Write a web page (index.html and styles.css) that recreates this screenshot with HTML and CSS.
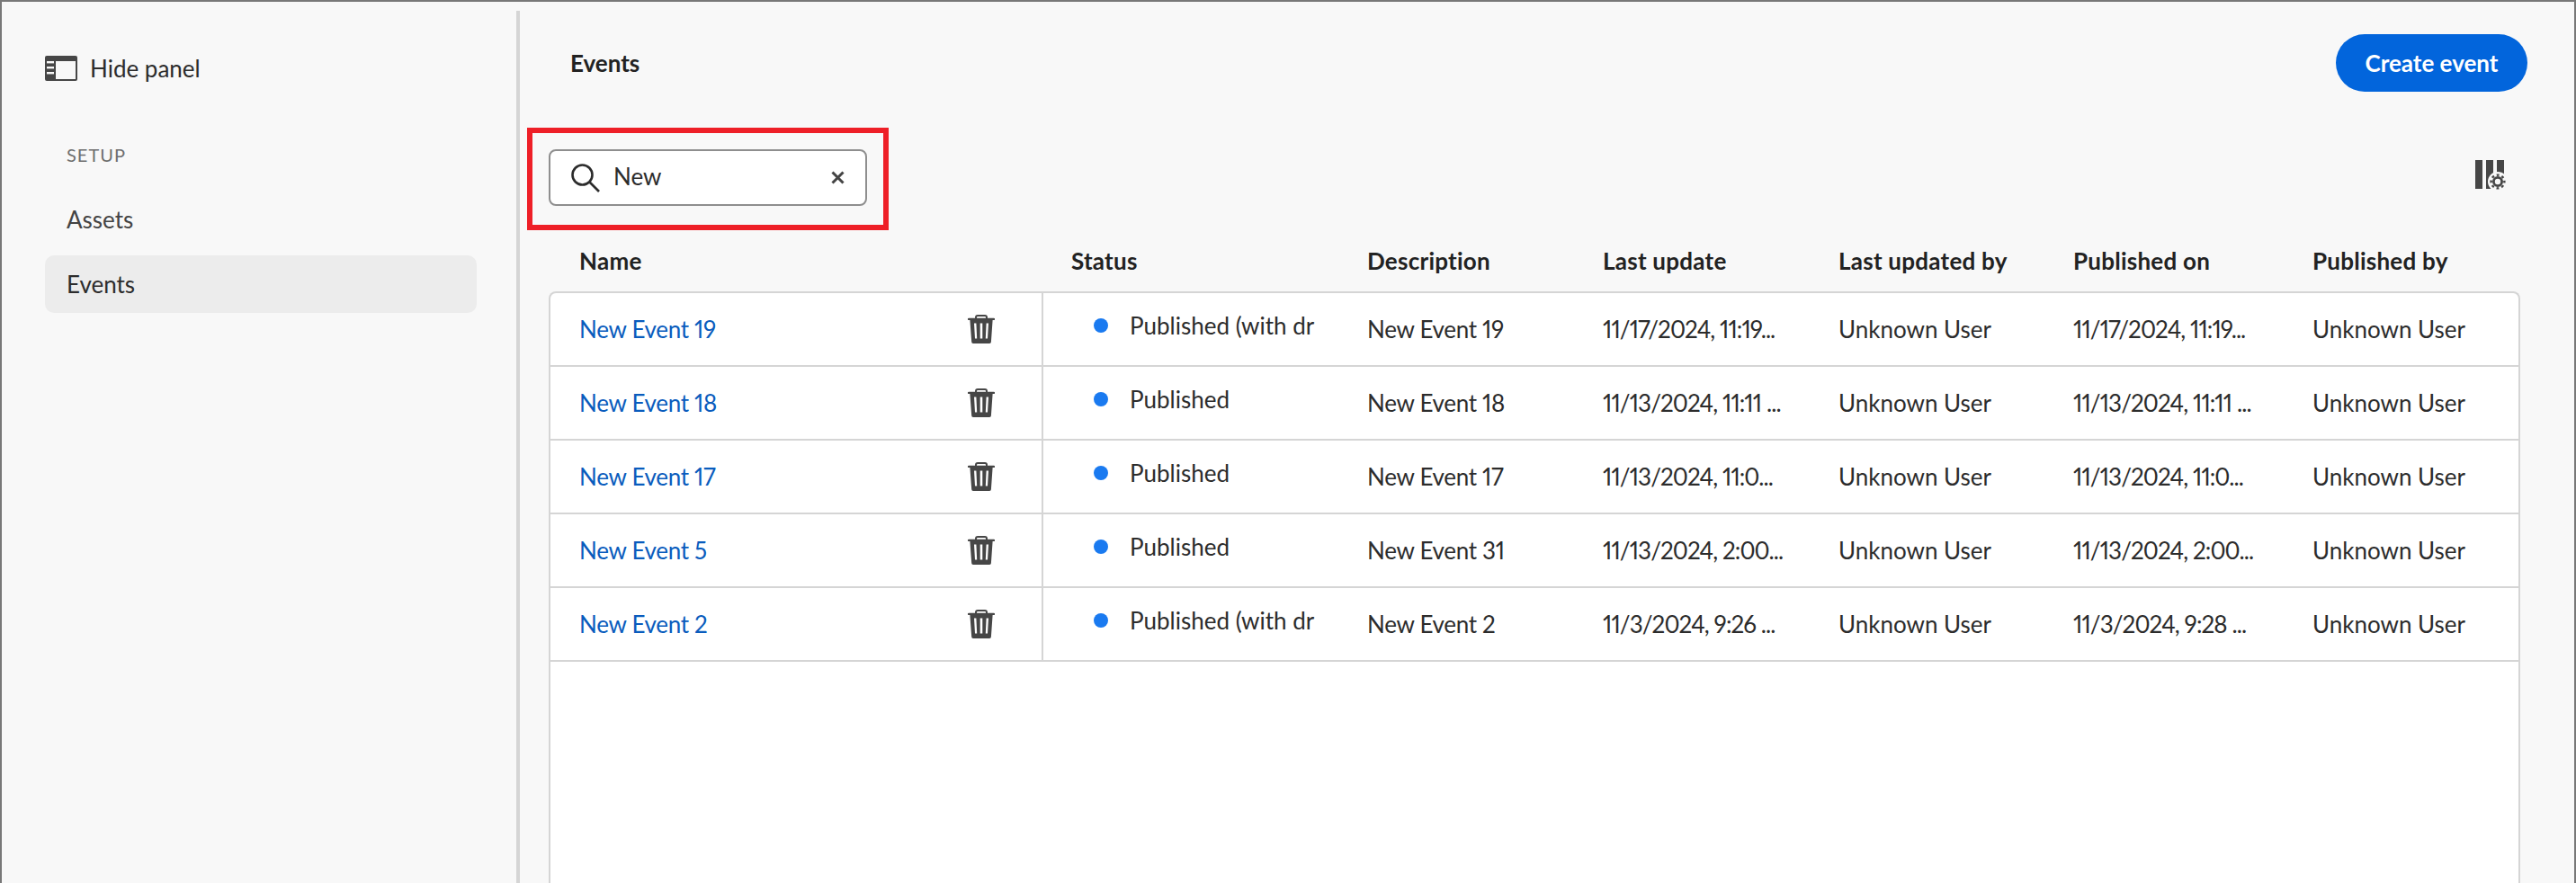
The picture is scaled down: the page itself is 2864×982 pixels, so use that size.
FILE: index.html
```html
<!DOCTYPE html>
<html lang="en">
<head>
    <meta charset="UTF-8">
    <title>Events</title>
    <link rel="stylesheet" href="styles.css">
</head>
<body>
    <div class="frame">
        <!-- Left panel -->
        <aside class="sidebar">
            <div class="hide-panel">
                <svg class="panel-icon" viewBox="0 0 36 28">
                    <rect width="36" height="28" rx="2" fill="#464646"/>
                    <rect x="12" y="6" width="22" height="20" fill="#f8f8f8"/>
                    <rect x="2" y="6" width="8" height="2.4" fill="#f8f8f8"/>
                    <rect x="2" y="12" width="8" height="2.4" fill="#f8f8f8"/>
                    <rect x="2" y="18" width="8" height="2.4" fill="#f8f8f8"/>
                </svg>
                <span>Hide panel</span>
            </div>
            <div class="nav-title">SETUP</div>
            <nav class="nav-list">
                <a class="nav-item" href="#">Assets</a>
                <a class="nav-item active" href="#">Events</a>
            </nav>
        </aside>

        <main class="content">
            <div class="page-head">
                <h1>Events</h1>
                <button class="btn-create" type="button">Create event</button>
            </div>

            <div class="toolbar">
                <div class="search">
                    <svg class="search-icon" viewBox="0 0 32 32">
                        <circle cx="12.5" cy="12.5" r="11" fill="none" stroke="#2c2c2c" stroke-width="2.6"/>
                        <line x1="20.5" y1="20.5" x2="31" y2="31" stroke="#2c2c2c" stroke-width="2.6"/>
                    </svg>
                    <span class="search-value">New</span>
                    <svg class="clear-icon" viewBox="0 0 15 15">
                        <path d="M1.5 1.5l12 12M13.5 1.5l-12 12" fill="none" stroke="#444" stroke-width="3"/>
                    </svg>
                    <!-- Annotation drawn over the screenshot -->
                    <div class="callout"></div>
                </div>
                <svg class="columns-icon" viewBox="0 0 36 36">
                    <rect x="0" y="0" width="8" height="32" fill="#464646"/>
                    <rect x="12" y="0" width="8" height="32" fill="#464646"/>
                    <rect x="24" y="0" width="8" height="32" fill="#464646"/>
                    <circle cx="25" cy="24" r="11" fill="#f8f8f8"/>
                    <circle cx="25" cy="24" r="4.6" fill="none" stroke="#464646" stroke-width="2.8"/>
                    <circle cx="25" cy="24" r="7.400" fill="none" stroke="#464646" stroke-width="2.4" stroke-dasharray="2.8 3" stroke-dashoffset="1.4"/>
                </svg>
            </div>

            <div class="row head-row">
                <div class="cell first">Name</div>
                <div class="cell">Status</div>
                <div class="cell">Description</div>
                <div class="cell">Last update</div>
                <div class="cell">Last updated by</div>
                <div class="cell">Published on</div>
                <div class="cell">Published by</div>
            </div>

            <div class="table-body">
                <div class="row">
                    <div class="cell first name-cell"><a href="#">New Event 19</a>
                        <svg class="trash" viewBox="0 0 30 32"><use href="#trash-icon"/></svg>
                    </div>
                    <div class="cell status-cell"><i class="dot"></i>Published (with dr</div>
                    <div class="cell tight">New Event 19</div>
                    <div class="cell date">11/17/2024, 11:19...</div>
                    <div class="cell">Unknown User</div>
                    <div class="cell date">11/17/2024, 11:19...</div>
                    <div class="cell">Unknown User</div>
                </div>
                <div class="row">
                    <div class="cell first name-cell"><a href="#">New Event 18</a>
                        <svg class="trash" viewBox="0 0 30 32"><use href="#trash-icon"/></svg>
                    </div>
                    <div class="cell status-cell"><i class="dot"></i>Published</div>
                    <div class="cell tight">New Event 18</div>
                    <div class="cell date">11/13/2024, 11:11 ...</div>
                    <div class="cell">Unknown User</div>
                    <div class="cell date">11/13/2024, 11:11 ...</div>
                    <div class="cell">Unknown User</div>
                </div>
                <div class="row">
                    <div class="cell first name-cell"><a href="#">New Event 17</a>
                        <svg class="trash" viewBox="0 0 30 32"><use href="#trash-icon"/></svg>
                    </div>
                    <div class="cell status-cell"><i class="dot"></i>Published</div>
                    <div class="cell tight">New Event 17</div>
                    <div class="cell date">11/13/2024, 11:0...</div>
                    <div class="cell">Unknown User</div>
                    <div class="cell date">11/13/2024, 11:0...</div>
                    <div class="cell">Unknown User</div>
                </div>
                <div class="row">
                    <div class="cell first name-cell"><a href="#">New Event 5</a>
                        <svg class="trash" viewBox="0 0 30 32"><use href="#trash-icon"/></svg>
                    </div>
                    <div class="cell status-cell"><i class="dot"></i>Published</div>
                    <div class="cell tight">New Event 31</div>
                    <div class="cell date">11/13/2024, 2:00...</div>
                    <div class="cell">Unknown User</div>
                    <div class="cell date">11/13/2024, 2:00...</div>
                    <div class="cell">Unknown User</div>
                </div>
                <div class="row">
                    <div class="cell first name-cell"><a href="#">New Event 2</a>
                        <svg class="trash" viewBox="0 0 30 32"><use href="#trash-icon"/></svg>
                    </div>
                    <div class="cell status-cell"><i class="dot"></i>Published (with dr</div>
                    <div class="cell tight">New Event 2</div>
                    <div class="cell date">11/3/2024, 9:26 ...</div>
                    <div class="cell">Unknown User</div>
                    <div class="cell date">11/3/2024, 9:28 ...</div>
                    <div class="cell">Unknown User</div>
                </div>
            </div>
        </main>
    </div>

    <!-- Shared trash icon -->
    <svg class="icon-defs" width="0" height="0">
        <symbol id="trash-icon" viewBox="0 0 30 32">
            <path fill="#464646" fill-rule="evenodd" d="M11 0h8a3 3 0 0 1 3 3v.8h7a1 1 0 0 1 0 2.2h-1.4l-1.7 24.2a1.8 1.8 0 0 1-1.8 1.8H6a1.8 1.8 0 0 1-1.8-1.8L2.4 6H1a1 1 0 0 1 0-2.2h7V3a3 3 0 0 1 3-3zm0 2a1 1 0 0 0-1 1v.8h10V3a1 1 0 0 0-1-1zM7 9.500l1 17h2.200l-.8-17zm6.700 0v17h2.600v-17zm6.900 0l-.8 17H22l1-17z"/>
        </symbol>
    </svg>
</body>
</html>
```

FILE: styles.css
```css
/* Page frame */
html, body {
    height: 100%;
}

body {
    margin: 0;
    overflow: hidden;
    background: #f8f8f8;
    color: #2c2c2c;
    font-family: Lato, "Open Sans", sans-serif;
    font-size: 26px;
    font-variant-numeric: proportional-nums;
}

.frame {
    box-sizing: border-box;
    display: flex;
    height: 982px;
    border: 2px solid #787878;
    border-bottom: none;
}

.icon-defs {
    position: absolute;
}

/* Sidebar */
.sidebar {
    box-sizing: border-box;
    width: 576px;
    margin-top: 10px;
    padding: 50px 0 0 48px;
    border-right: 4px solid #d5d5d5;
    flex-shrink: 0;
}

.hide-panel {
    display: flex;
    align-items: center;
    gap: 14px;
    height: 28px;
    color: #2c2c2c;
}

.panel-icon {
    width: 36px;
    height: 28px;
}

.nav-title {
    margin: 70px 0 0 24px;
    color: #6e6e6e;
    font-size: 20px;
    letter-spacing: 1px;
    line-height: 24px;
}

.nav-list {
    display: flex;
    flex-direction: column;
    gap: 8px;
    width: 480px;
    margin-top: 28px;
}

.nav-item {
    display: flex;
    align-items: center;
    height: 64px;
    padding-left: 24px;
    border-radius: 10px;
    color: #444;
    text-decoration: none;
}

.nav-item.active {
    background: #ececec;
    color: #2c2c2c;
}

/* Main content */
.content {
    flex: 1;
    display: flex;
    flex-direction: column;
    min-width: 0;
    padding: 36px 0 0 32px;
}

.page-head {
    display: flex;
    align-items: center;
    justify-content: space-between;
    height: 64px;
    padding-right: 52px;
}

.page-head h1 {
    margin: 0 0 0 24px;
    font-size: 26px;
    font-weight: 700;
    color: #222;
}

.btn-create {
    width: 213px;
    height: 64px;
    padding: 0;
    border: none;
    border-radius: 32px;
    background: #0265dc;
    color: white;
    font-family: inherit;
    font-size: 26px;
    font-weight: 700;
}

.toolbar {
    display: flex;
    align-items: flex-start;
    justify-content: space-between;
    margin-top: 64px;
    padding-right: 74px;
}

.search {
    position: relative;
    box-sizing: border-box;
    display: flex;
    align-items: center;
    width: 354px;
    height: 63px;
    padding: 0 23px;
    border: 2px solid #8e8e8e;
    border-radius: 8px;
    background: white;
}

.search-icon {
    width: 32px;
    height: 32px;
}

.search-value {
    flex: 1;
    margin: 0 0 3px 15px;
}

.clear-icon {
    width: 15px;
    height: 15px;
}

.callout {
    position: absolute;
    top: -26px;
    left: -26px;
    right: -26px;
    bottom: -29px;
    border: 6px solid #ee1f27;
}

.columns-icon {
    width: 36px;
    height: 36px;
    margin-top: 12px;
}

/* Table */
.row {
    display: grid;
    grid-template-columns: 548px 329px 262px 262px 261px 266px 1fr;
    height: 82px;
    box-sizing: border-box;
    border-bottom: 2px solid #d5d5d5;
}

.cell {
    display: flex;
    align-items: center;
    padding-left: 31px;
    white-space: nowrap;
    overflow: hidden;
}

.cell.first {
    padding-left: 32px;
}

.date {
    letter-spacing: -0.9px;
}

.tight {
    letter-spacing: -0.3px;
}

.head-row {
    height: 44px;
    margin: 39px 60px 12px 0;
    padding: 0 2px;
    border-bottom: none;
    font-weight: 700;
    color: #222;
    letter-spacing: 0.25px;
}

.table-body {
    flex: 1;
    margin-right: 60px;
    border: 2px solid #d5d5d5;
    border-bottom: none;
    border-radius: 8px 8px 0 0;
    background: white;
}

.name-cell {
    justify-content: space-between;
    padding-right: 52px;
    border-right: 2px solid #d5d5d5;
    box-sizing: border-box;
}

.name-cell a {
    color: #0a5cbd;
    text-decoration: none;
    letter-spacing: -0.3px;
}

.trash {
    width: 30px;
    height: 32px;
}

.status-cell {
    padding-left: 56px;
    padding-bottom: 8px;
}

.dot {
    width: 16px;
    height: 16px;
    margin-right: 24px;
    border-radius: 50%;
    background: #1a7af0;
    flex-shrink: 0;
}
```
